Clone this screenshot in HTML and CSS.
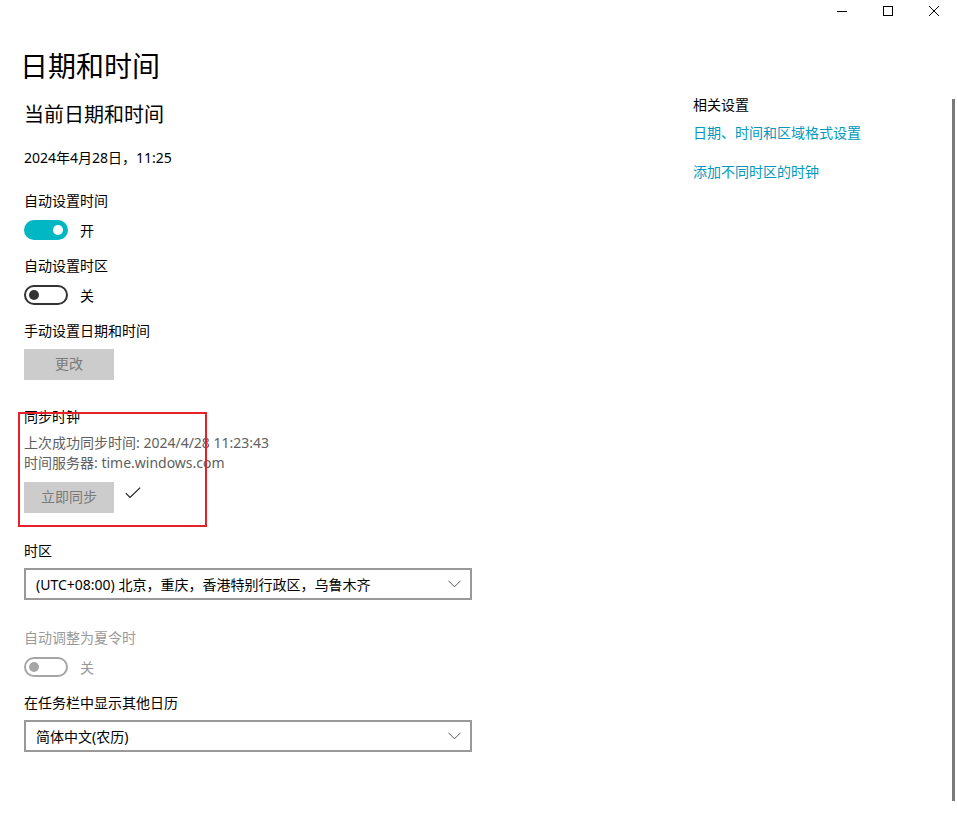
FILE: index.html
```html
<!DOCTYPE html>
<html lang="zh-CN">
<head>
    <meta charset="utf-8">
    <title>日期和时间</title>
    <link rel="stylesheet" href="styles.css">
</head>
<body>
    <div class="titlebar">
        <div class="win-btn">
            <svg width="10" height="10" viewBox="0 0 10 10"><path d="M0 5.5H10" stroke="#000" stroke-width="1"/></svg>
        </div>
        <div class="win-btn">
            <svg width="10" height="10" viewBox="0 0 10 10"><rect x="0.5" y="0.5" width="9" height="9" fill="none" stroke="#000" stroke-width="1"/></svg>
        </div>
        <div class="win-btn">
            <svg width="10" height="10" viewBox="0 0 10 10"><path d="M0 0L10 10M10 0L0 10" stroke="#000" stroke-width="1"/></svg>
        </div>
    </div>

    <div class="page">
        <div class="main">
            <h1 class="page-title">日期和时间</h1>
            <h2 class="section-title">当前日期和时间</h2>
            <p class="text now">2024年4月28日，11:25</p>

            <p class="text label first">自动设置时间</p>
            <div class="toggle-row">
                <span class="toggle on"><span class="knob"></span></span>
                <span class="toggle-text">开</span>
            </div>

            <p class="text label">自动设置时区</p>
            <div class="toggle-row">
                <span class="toggle"><span class="knob"></span></span>
                <span class="toggle-text">关</span>
            </div>

            <p class="text label">手动设置日期和时间</p>
            <button class="btn">更改</button>

            <div class="sync">
                <p class="text">同步时钟</p>
                <p class="text info first-info">上次成功同步时间: 2024/4/28 11:23:43</p>
                <p class="text info">时间服务器: time.windows.com</p>
                <div class="sync-row">
                    <button class="btn">立即同步</button>
                    <svg class="check" width="16" height="12" viewBox="0 0 16 12"><path d="M0.8 6.2L5 10.4L15.2 0.6" fill="none" stroke="#222" stroke-width="1.2"/></svg>
                </div>
                <div class="highlight"></div>
            </div>

            <p class="text label gap-lg">时区</p>
            <div class="select">
                <span>(UTC+08:00) 北京，重庆，香港特别行政区，乌鲁木齐</span>
                <svg width="13" height="8" viewBox="0 0 13 8"><path d="M0.5 0.8L6.5 6.8L12.5 0.8" fill="none" stroke="#555" stroke-width="1"/></svg>
            </div>

            <p class="text label gap-lg disabled">自动调整为夏令时</p>
            <div class="toggle-row">
                <span class="toggle off-disabled"><span class="knob"></span></span>
                <span class="toggle-text disabled">关</span>
            </div>

            <p class="text label">在任务栏中显示其他日历</p>
            <div class="select">
                <span>简体中文(农历)</span>
                <svg width="13" height="8" viewBox="0 0 13 8"><path d="M0.5 0.8L6.5 6.8L12.5 0.8" fill="none" stroke="#555" stroke-width="1"/></svg>
            </div>
        </div>

        <div class="side">
            <p class="text">相关设置</p>
            <a class="link" href="#">日期、时间和区域格式设置</a>
            <a class="link" href="#">添加不同时区的时钟</a>
        </div>
    </div>

    <div class="scrollbar"></div>
</body>
</html>
```
FILE: styles.css
```css
body {
    margin: 0;
    background: #fff;
    color: #000;
    font-family: "Noto Sans", "Noto Sans CJK SC", sans-serif;
    font-size: 14px;
    width: 957px;
    height: 829px;
    overflow: hidden;
    position: relative;
}

.titlebar {
    display: flex;
    justify-content: flex-end;
    height: 22px;
}

.win-btn {
    width: 46px;
    display: flex;
    align-items: center;
    justify-content: center;
}

.page {
    display: flex;
}

.main {
    width: 669px;
    padding-left: 24px;
}

.page-title {
    margin: 24px 0 0 -4px;
    font-size: 28px;
    font-weight: 400;
    line-height: 40px;
}

.section-title {
    margin: 15px 0 0;
    font-size: 20px;
    font-weight: 400;
    line-height: 28px;
}

.text {
    margin: 0;
    line-height: 20px;
}

.now {
    margin-top: 19px;
}

.label {
    margin-top: 16px;
}

.label.first {
    margin-top: 23px;
}

.label.gap-lg {
    margin-top: 28px;
}

.disabled {
    color: #9a9a9a;
}

.toggle-row {
    display: flex;
    align-items: center;
    margin-top: 9px;
    height: 20px;
}

.toggle {
    box-sizing: border-box;
    width: 44px;
    height: 20px;
    border-radius: 10px;
    border: 2px solid #333;
    display: flex;
    align-items: center;
    padding: 0 3px;
}

.knob {
    width: 10px;
    height: 10px;
    border-radius: 50%;
    background: #333;
}

.toggle.on {
    background: #00b7c3;
    border-color: #00b7c3;
    justify-content: flex-end;
}

.toggle.on .knob {
    background: #fff;
}

.toggle.off-disabled {
    border-color: #a6a6a6;
}

.toggle.off-disabled .knob {
    background: #a6a6a6;
}

.toggle-text {
    margin-left: 12px;
}

.btn {
    display: block;
    margin-top: 8px;
    width: 90px;
    height: 31px;
    border: 0;
    background: #ccc;
    color: #7a7a7a;
    font-family: inherit;
    font-size: 14px;
    padding: 0 0 3px;
}

.sync {
    position: relative;
    margin-top: 27px;
}

.info {
    color: #606060;
}

.first-info {
    margin-top: 6px;
}

.sync-row {
    display: flex;
    align-items: flex-start;
    margin-top: 9px;
}

.sync-row .btn {
    margin-top: 0;
}

.check {
    margin: 5px 0 0 11px;
}

.highlight {
    position: absolute;
    left: -6px;
    top: 5px;
    width: 189px;
    height: 115px;
    box-sizing: border-box;
    border: 2px solid #e8202a;
}

.select {
    box-sizing: border-box;
    width: 448px;
    height: 32px;
    margin-top: 7px;
    border: 2px solid #999;
    display: flex;
    align-items: center;
    justify-content: space-between;
    padding: 0 9px 0 10px;
}

.side {
    padding-top: 73px;
    display: flex;
    flex-direction: column;
}

.link {
    color: #0099bc;
    text-decoration: none;
    line-height: 20px;
    margin-top: 8px;
}

.link + .link {
    margin-top: 19px;
}

.scrollbar {
    position: absolute;
    left: 952px;
    top: 99px;
    width: 3px;
    height: 702px;
    background: #7a7a7a;
}
```
